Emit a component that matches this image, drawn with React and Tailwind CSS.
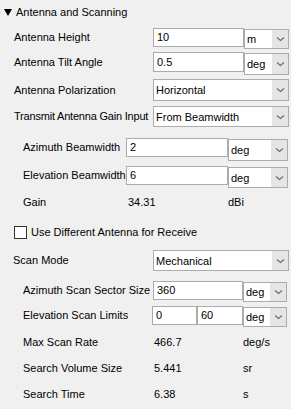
import React from 'react';

const Chevron = () => (
  <svg width="9" height="6" viewBox="0 0 9 6" fill="none">
    <path d="M1 1.5 L4.5 4.5 L8 1.5" stroke="#6b6b6b" strokeWidth="1.1" />
  </svg>
);

const Field = ({ value, className }) => (
  <div className={`flex items-center bg-white border border-[#ababab] pl-[3px] ${className}`}>
    {value}
  </div>
);

const Dropdown = ({ value, className }) => (
  <div className={`flex bg-white border border-[#acacac] ${className}`}>
    <div className="flex-1 flex items-center pl-[2px] pt-[1px]">{value}</div>
    <div className="w-[16px] bg-[#e5e5e5] flex items-center justify-center">
      <Chevron />
    </div>
  </div>
);

export default function App() {
  return (
    <div
      className="w-[291px] h-[409px] bg-[#f0f0f0] text-[11px] leading-none text-black whitespace-nowrap overflow-hidden"
      style={{ fontFamily: '"Liberation Sans", Arial, sans-serif' }}
    >
      {/* Section header */}
      <div className="h-[24px] flex items-center pl-[4px]">
        <svg width="8" height="7" viewBox="0 0 8 7" className="mr-[4px]">
          <path d="M0 0 H8 L4 7 Z" fill="#000" />
        </svg>
        <span>Antenna and Scanning</span>
      </div>

      {/* Antenna Height */}
      <div className="h-[28px] flex items-start pt-[4px] pl-[14px]">
        <div className="w-[139px] h-[19px] flex items-center">Antenna Height</div>
        <Field value="10" className="w-[91px] h-[19px]" />
        <Dropdown value="m" className="w-[45px] h-[20px] mt-[1px]" />
      </div>

      {/* Tilt */}
      <div className="h-[27px] flex items-start pl-[14px]">
        <div className="w-[139px] h-[20px] flex items-center">Antenna Tilt Angle</div>
        <Field value="0.5" className="w-[91px] h-[20px]" />
        <Dropdown value="deg" className="w-[45px] h-[22px] mt-[1px]" />
      </div>

      {/* Polarization */}
      <div className="h-[27px] flex items-start pl-[14px]">
        <div className="w-[139px] h-[22px] flex items-center">Antenna Polarization</div>
        <Dropdown value="Horizontal" className="w-[136px] h-[22px]" />
      </div>

      {/* Gain input */}
      <div className="h-[32px] flex items-start pl-[14px]">
        <div className="w-[139px] h-[21px] flex items-center tracking-[-0.2px]">Transmit Antenna Gain Input</div>
        <Dropdown value="From Beamwidth" className="w-[136px] h-[21px]" />
      </div>

      {/* Beamwidths */}
      <div className="h-[28px] flex items-start pl-[23px]">
        <div className="w-[103px] h-[19px] flex items-center">Azimuth Beamwidth</div>
        <Field value="2" className="w-[102px] h-[19px]" />
        <Dropdown value="deg" className="w-[60px] h-[22px] mt-[1px]" />
      </div>
      <div className="h-[28px] flex items-start pl-[23px]">
        <div className="w-[103px] h-[19px] flex items-center">Elevation Beamwidth</div>
        <Field value="6" className="w-[102px] h-[19px]" />
        <Dropdown value="deg" className="w-[60px] h-[21px] mt-[1px]" />
      </div>
      <div className="h-[16px] flex items-center pl-[23px]">
        <div className="w-[105px]">Gain</div>
        <div className="w-[100px]">34.31</div>
        <div>dBi</div>
      </div>

      {/* Receive checkbox */}
      <div className="h-[40px] flex items-start pt-[16px] pl-[14px]">
        <div className="w-[13px] h-[13px] bg-white border border-[#333]" />
        <div className="h-[13px] flex items-center ml-[4px]">Use Different Antenna for Receive</div>
      </div>

      {/* Scan mode */}
      <div className="h-[31px] flex items-start pl-[13px]">
        <div className="w-[140px] h-[21px] flex items-center">Scan Mode</div>
        <Dropdown value="Mechanical" className="w-[136px] h-[21px]" />
      </div>

      <div className="h-[25px] flex items-start pl-[23px]">
        <div className="w-[130px] h-[19px] flex items-center">Azimuth Scan Sector Size</div>
        <Field value="360" className="w-[90px] h-[19px]" />
        <Dropdown value="deg" className="w-[44px] h-[20px] mt-[1px]" />
      </div>
      <div className="h-[28px] flex items-start pl-[23px]">
        <div className="w-[129px] h-[19px] flex items-center">Elevation Scan Limits</div>
        <Field value="0" className="w-[45px] h-[19px]" />
        <Field value="60" className="w-[46px] h-[19px]" />
        <Dropdown value="deg" className="w-[44px] h-[20px] mt-[1px]" />
      </div>

      {/* Derived values */}
      <div className="h-[16px] flex items-center pl-[23px]">
        <div className="w-[131px]">Max Scan Rate</div>
        <div className="w-[89px]">466.7</div>
        <div>deg/s</div>
      </div>
      <div className="h-[16px] mt-[10px] flex items-center pl-[23px]">
        <div className="w-[131px]">Search Volume Size</div>
        <div className="w-[89px]">5.441</div>
        <div>sr</div>
      </div>
      <div className="h-[16px] mt-[10px] flex items-center pl-[23px]">
        <div className="w-[131px]">Search Time</div>
        <div className="w-[89px]">6.38</div>
        <div>s</div>
      </div>
    </div>
  );
}
